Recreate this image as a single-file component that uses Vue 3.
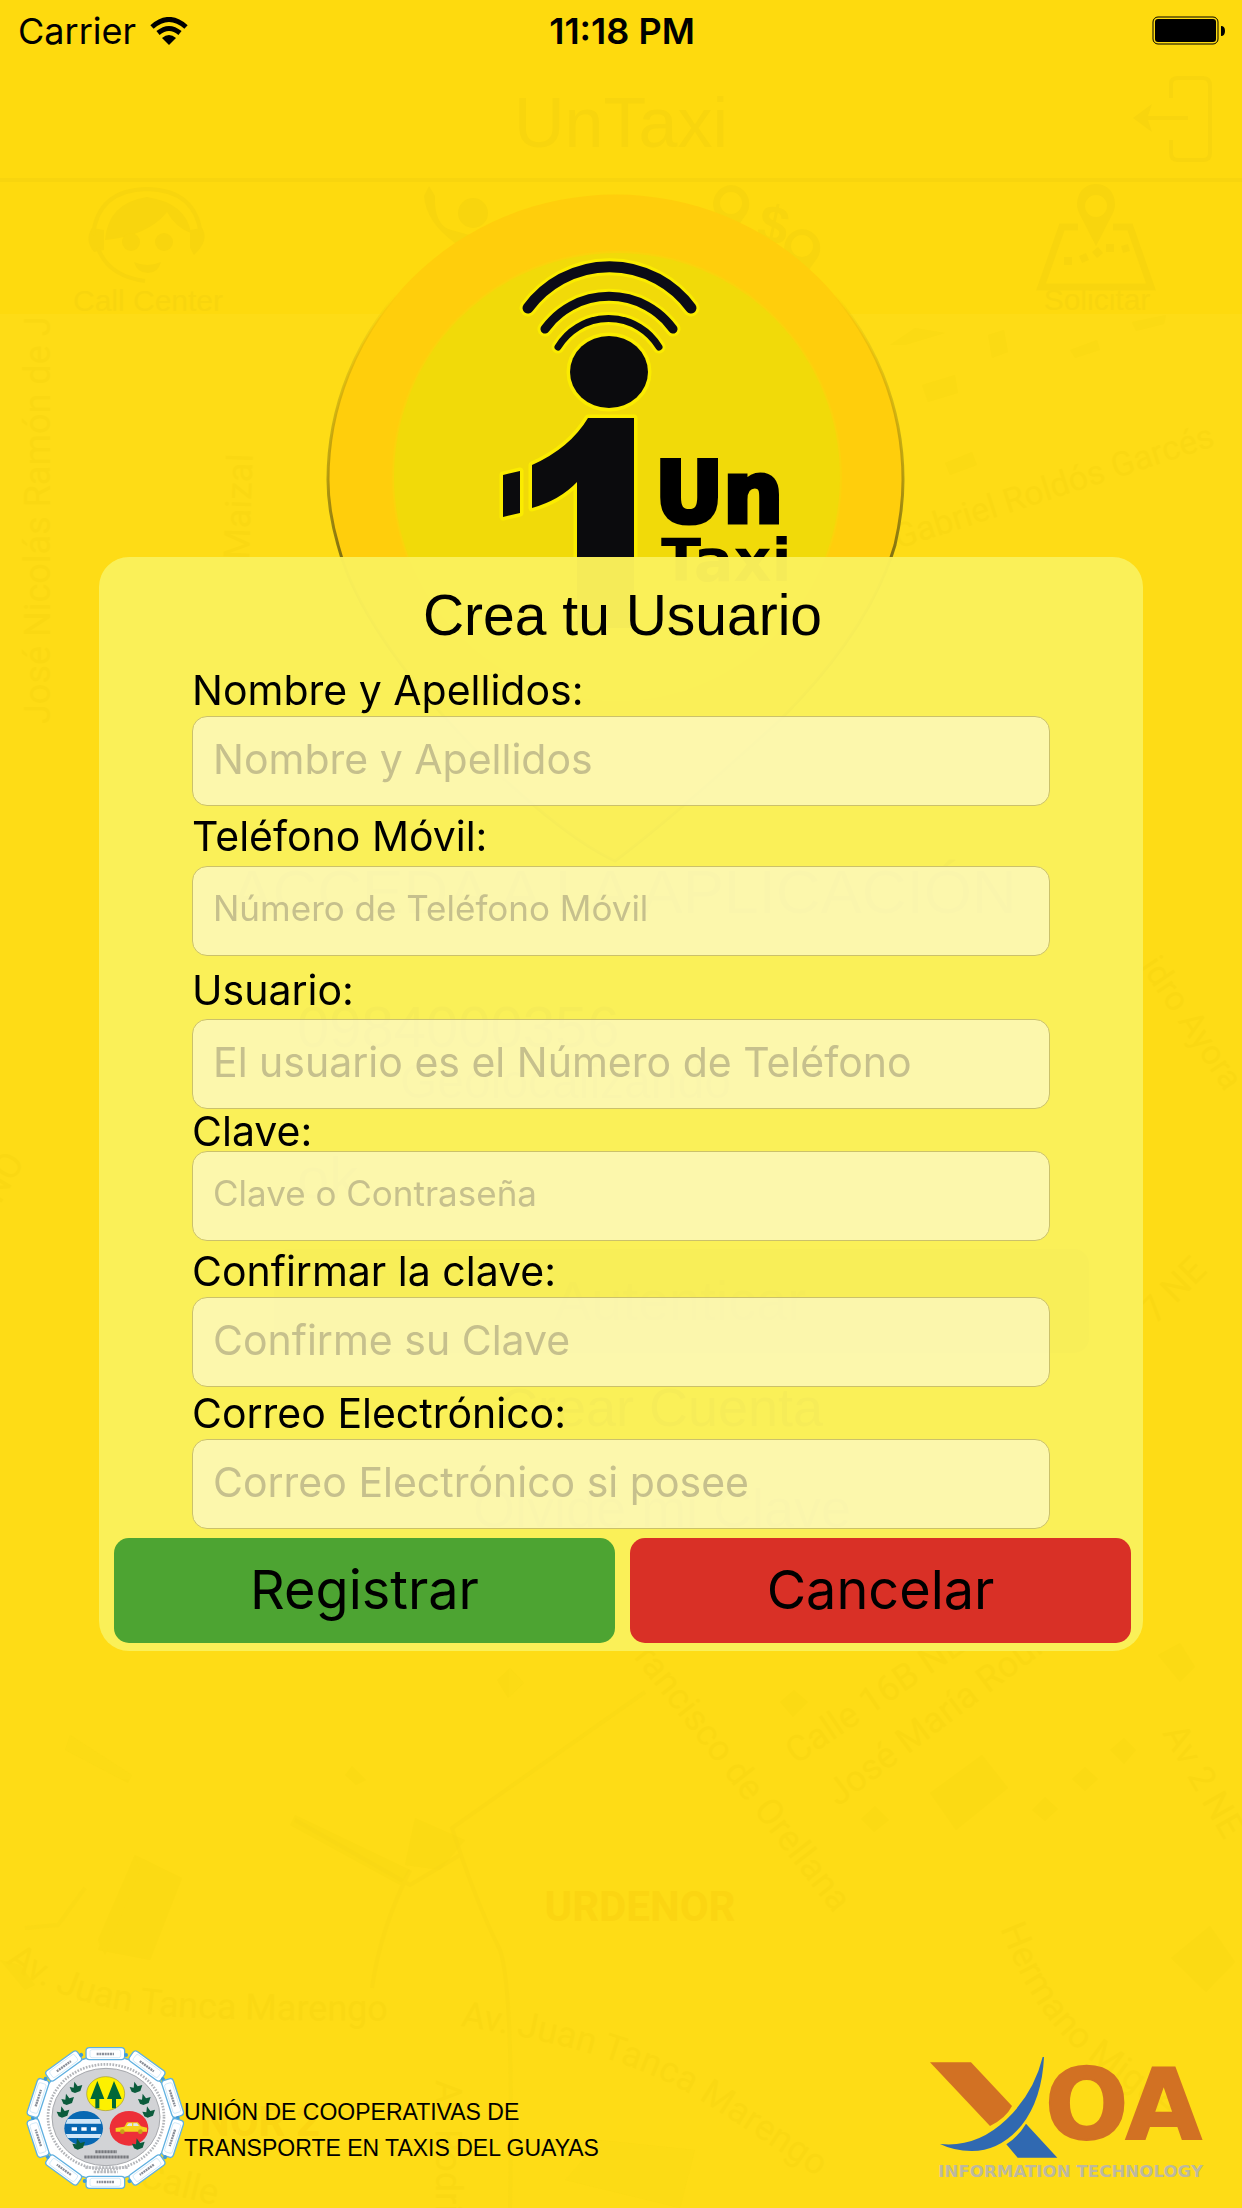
<script setup>
import { reactive } from 'vue'

const fields = [
  { id: 'nombre', label: 'Nombre y Apellidos:', hint: 'Nombre y Apellidos', type: 'text', space: 'first' },
  { id: 'telefono', label: 'Teléfono Móvil:', hint: 'Número de Teléfono Móvil', type: 'tel', space: 'roomy', small: true },
  { id: 'usuario', label: 'Usuario:', hint: 'El usuario es el Número de Teléfono', type: 'text', space: 'wide' },
  { id: 'clave', label: 'Clave:', hint: 'Clave o Contraseña', type: 'password', space: 'snug', small: true },
  { id: 'confirmar', label: 'Confirmar la clave:', hint: 'Confirme su Clave', type: 'password', space: 'normal' },
  { id: 'correo', label: 'Correo Electrónico:', hint: 'Correo Electrónico si posee', type: 'email', space: 'close' },
]

const form = reactive({ nombre: '', telefono: '', usuario: '', clave: '', confirmar: '', correo: '' })

const badges = Array.from({ length: 10 }, (_, i) => {
  const a = ((i * 36 - 90) * Math.PI) / 180
  return {
    x: Math.round(315 + 212 * Math.cos(a)),
    y: Math.round(259 + 193 * Math.sin(a)),
    turn: i * 36,
  }
})

const leaves = [
  [228, 168], [203, 204], [189, 242], [408, 168], [433, 204], [446, 242], [236, 338], [415, 338],
]

const blocks = [
  '890,345 915,328 945,333 905,345', '988,335 1004,330 1008,352 992,358', '1070,350 1097,340 1100,350 1075,358',
  '922,385 955,375 958,393 928,402', '945,463 972,452 977,465 950,475', '1132,322 1166,315 1164,324 1136,331',
  '930,1793 982,1755 1008,1788 956,1830', '1158,1655 1180,1643 1195,1667 1180,1682', '1110,1750 1124,1738 1136,1750 1124,1764',
  '1072,1779 1085,1767 1098,1779 1085,1791', '1032,1810 1045,1797 1058,1809 1045,1821', '861,1819 875,1806 889,1820 874,1832',
  '780,1702 794,1690 808,1702 793,1717', '1171,1958 1210,1926 1235,1962 1206,1992', '135,1855 182,1878 150,1960 98,1950',
  '98,1940 135,1855 140,1870 105,1955', '295,1815 410,1870 400,1885 290,1825', '415,1818 465,1840 440,1870 405,1865',
  '70,1735 132,1775 128,1783 65,1750', '497,1680 510,1668 524,1683 508,1698', '345,1775 352,1766 366,1780 356,1785',
  '565,2180 600,2140 695,2150 680,2208', '0,1960 20,1965 35,1985 25,1990',
]
</script>

<template>
  <div class="screen">
    <svg class="backdrop" viewBox="0 0 1242 2208" preserveAspectRatio="xMidYMin slice" aria-hidden="true">
      <defs>
        <linearGradient id="edge" x1="0" y1="0" x2="0" y2="1">
          <stop offset="0.15" stop-color="#5c5310" stop-opacity="0" />
          <stop offset="0.4" stop-color="#5c5310" stop-opacity="0.4" />
          <stop offset="0.6" stop-color="#5c5310" stop-opacity="0.9" />
        </linearGradient>
        <path id="street-a" d="M6 1962 Q70 2014 200 2018 T420 2020" />
        <path id="street-b" d="M460 2026 Q620 2050 700 2100 T850 2200" />
        <path id="street-c" d="M1000 1928 Q1035 2020 1090 2060 T1190 2140" />
      </defs>

      <!-- map -->
      <g class="blocks">
        <polygon v-for="b in blocks" :key="b" :points="b" />
      </g>
      <g class="roads">
        <path d="M645 1692 L452 1828 Q475 1900 500 1950 Q514 1990 510 2208" />
        <path d="M410 1870 Q380 1930 372 1988" />
        <path d="M460 1855 L410 1885 L295 1820" />
        <path d="M85 1888 L58 1925 L25 1928" />
      </g>
      <g class="streets">
        <text transform="translate(50 724) rotate(-90)">José Nicolás Ramón de J</text>
        <text transform="translate(249 560) rotate(-88)">Maizal</text>
        <text class="minor" transform="translate(898 549) rotate(-18)">Gabriel Roldós Garcés</text>
        <text class="minor" transform="translate(1140 966) rotate(56)">idro Ayora</text>
        <text transform="translate(1155 1325) rotate(-45)">7 NE</text>
        <text transform="translate(0 1205) rotate(-60)">NO</text>
        <text transform="translate(834 1914) rotate(52)" text-anchor="end">Francisco de Orellana</text>
        <text transform="translate(796 1765) rotate(-34)">Calle 16B NE</text>
        <text transform="translate(838 1807) rotate(-37)">José María Roura</text>
        <text transform="translate(1162 1733) rotate(60)">Av 2 NE</text>
        <text transform="translate(436 2080) rotate(90)">Av Rodri</text>
        <text transform="translate(138 2186) rotate(14)">Calle</text>
        <text><textPath href="#street-a">Av. Juan Tanca Marengo</textPath></text>
        <text><textPath href="#street-b">Av. Juan Tanca Marengo</textPath></text>
        <text><textPath href="#street-c">Hermano Miguel</textPath></text>
      </g>
      <g class="zones">
        <text x="640" y="1921" text-anchor="middle">URDENOR</text>
        <text x="200" y="2136">NOR 2</text>
      </g>

      <!-- navigation bar and tabs -->
      <rect class="bar" width="1242" height="314" />
      <rect class="ghost" y="178" width="1242" height="4" />
      <g class="ghost">
        <text class="brand" x="621" y="147" text-anchor="middle">UnTaxi</text>
        <text class="tab" x="148" y="311" text-anchor="middle">Call Center</text>
        <text class="tab" x="1097" y="310" text-anchor="middle">Solicitar</text>
        <path d="M1133 118 L1152 104 L1148 116 H1188 V120 H1148 L1152 132 Z" />
        <path d="M105 240 Q108 203 147 197 Q186 203 191 233 Q176 228 167 212 Q148 236 105 240 Z" />
        <ellipse cx="131" cy="242" rx="9" ry="9" />
        <ellipse cx="164" cy="242" rx="9" ry="9" />
        <path d="M134 262 Q147 268 161 262 Q158 273 148 273 Q137 273 134 262 Z" />
        <path d="M92 228 Q84 240 94 252 L104 250 V230 Z M202 228 Q210 240 194 255 L190 248 V230 Z" />
        <path d="M429 186 L435 196 Q434 222 448 229 L473 236 L500 230 L480 270 L455 243 Q426 222 424 196 Z" />
        <circle cx="473" cy="213" r="15" />
        <text class="coin" transform="translate(755 240) rotate(12)">$</text>
        <path fill-rule="evenodd" d="M1096 184 a18 20 0 0 1 17 29 L1096 246 L1079 213 a18 20 0 0 1 17 -29 Z M1096 195 a11 11 0 1 0 0 22 a11 11 0 0 0 0 -22 Z" />
        <path fill-rule="evenodd" d="M731 185 a19 19 0 0 1 16 28 L738 226 L716 214 a19 19 0 0 1 15 -29 Z M731 192 a11 11 0 1 0 0 22 a11 11 0 0 0 0 -22 Z" />
        <path fill-rule="evenodd" d="M802 229 a19 19 0 0 1 16 28 L806 274 L786 256 a19 19 0 0 1 16 -27 Z M802 235 a11 11 0 1 0 0 22 a11 11 0 0 0 0 -22 Z" />
        <path d="M1064 257 h8 v8 h-8 z M1079 256 l7 -3 3 7 -7 3 z M1092 252 l6 -5 5 6 -6 5 z M1106 244 h8 v8 h-8 z M1121 246 l7 -2 2 7 -7 2 z" />
      </g>
      <g class="ghost-line">
        <path d="M1171 98 V84 Q1171 78 1178 78 H1203 Q1210 78 1210 86 V153 Q1210 160 1203 160 H1178 Q1171 160 1171 153 V140" />
        <path d="M93 235 Q98 190 147 189 Q196 190 201 235" />
        <path d="M98 248 Q108 276 145 281" />
        <path d="M1078 227 H1062 L1041 287 H1151 L1130 227 H1113" stroke-width="7" />
      </g>

      <!-- sign-in screen hidden behind the dialog -->
      <g class="under">
        <text x="624" y="913" text-anchor="middle" font-size="62">ACCEDA A LA APLICACIÓN</text>
        <text x="297" y="1047" font-size="58">0984000356</text>
        <text x="400" y="1098" font-size="48">Geolocalizando</text>
        <text x="297" y="1198" font-size="58">ok</text>
        <rect x="274" y="1249" width="815" height="104" rx="15" opacity="0.5" />
        <text x="680" y="1320" text-anchor="middle" font-size="56">Autenticar</text>
        <text x="661" y="1426" text-anchor="middle" font-size="54">Crear Cuenta</text>
        <text x="662" y="1527" text-anchor="middle" font-size="54">Olvidé mi Clave</text>
      </g>

      <!-- pin logo -->
      <path
        d="M615 861 Q570 840 503 778 Q362 640 338 545 Q328 510 328 480 A287 285 0 0 1 903 480 Q903 510 895 545 Q870 630 780 720 Q670 820 615 861 Z"
        fill="#ffce0c" stroke="url(#edge)" stroke-width="3"
      />
      <ellipse cx="617" cy="477" rx="224" ry="225" fill="#f1da09" stroke="#fbd30c" stroke-width="2" />
      <g v-for="pass in ['halo', 'ink']" :key="pass" :class="pass">
        <path class="wave w1" d="M528 308 A101 101 0 0 1 691 308" />
        <path class="wave w2" d="M545 329 A79 79 0 0 1 673 329" />
        <path class="wave w3" d="M558 347 A59 59 0 0 1 659 347" />
        <ellipse cx="609" cy="372" rx="39" ry="36" />
        <path d="M588 418 H634 V628 H577 V482 Q560 500 532 508 V465 Q570 448 588 418 Z" />
        <path d="M503 475 L520 471 V513 L503 517 Z" />
      </g>
      <g class="wordmark">
        <text class="un" x="655" y="522">Un</text>
        <text class="taxi" x="661" y="581">Taxi</text>
      </g>
    </svg>

    <header class="status">
      <div class="carrier">
        <span>Carrier</span>
        <svg width="38" height="28" viewBox="0 0 38 28" aria-label="Wi-Fi">
          <g fill="none" stroke="#000" stroke-width="5">
            <path d="M2 10 Q19 -5 36 10" />
            <path d="M8 16 Q19 7 30 16" />
          </g>
          <path d="M12 21 Q19 15 26 21 L19 28 Z" />
        </svg>
      </div>
      <time>11:18 PM</time>
      <div class="power">
        <svg width="74" height="30" viewBox="0 0 74 30" aria-label="Batería">
          <rect x="1" y="1" width="65" height="27" rx="5" fill="none" stroke="#000" stroke-width="1" />
          <rect x="3" y="3" width="61" height="23" rx="3" />
          <path d="M69 10 Q73 10 73 15 Q73 20 69 20 Z" />
        </svg>
      </div>
    </header>

    <main>
      <form class="card" @submit.prevent>
        <h1>Crea tu Usuario</h1>
        <div class="fields">
          <div v-for="f in fields" :key="f.id" class="field" :class="f.space">
            <label :for="f.id">{{ f.label }}</label>
            <input :id="f.id" v-model="form[f.id]" :type="f.type" :placeholder="f.hint" :class="{ small: f.small }" />
          </div>
        </div>
        <div class="actions">
          <button type="submit" class="ok">Registrar</button>
          <button type="button" class="cancel">Cancelar</button>
        </div>
      </form>
    </main>

    <footer>
      <svg class="seal" width="158" height="146" viewBox="77 40 474 438" aria-label="Unión de Cooperativas">
        <ellipse cx="315" cy="259" rx="204" ry="186" fill="#fff" stroke="#5fb0e0" stroke-width="4" />
        <g v-for="b in badges" :key="b.turn" :transform="`translate(${b.x} ${b.y}) rotate(${b.turn})`">
          <rect x="-58" y="-18" width="116" height="36" rx="10" fill="#fff" stroke="#5fb0e0" stroke-width="4" />
          <rect x="-46" y="-12" width="92" height="24" rx="6" fill="#fff" stroke="#c5e2f4" stroke-width="2" />
          <path d="M-26 1 H26" stroke="#8a8f99" stroke-width="7" stroke-dasharray="6 2" />
          <circle cx="62" cy="4" r="6" fill="#3f9bd8" />
        </g>
        <ellipse cx="317" cy="256" rx="174" ry="158" fill="none" stroke="#b3b5b9" stroke-width="8" stroke-dasharray="5 4" />
        <ellipse cx="317" cy="256" rx="162" ry="146" fill="#d2d3d6" stroke="#a8aaae" stroke-width="3" />
        <ellipse cx="316" cy="186" rx="57" ry="51" fill="#fdf100" stroke="#a59a30" stroke-width="2" />
        <path d="M291 148 L312 202 H297 V230 H285 V202 H270 Z M341 148 L364 202 H347 V230 H335 V202 H320 Z" fill="#006838" />
        <ellipse cx="250" cy="290" rx="58" ry="52" fill="#0868b3" />
        <path d="M202 262 H298 L303 276 H196 Z M196 307 H303 L298 319 H202 Z" fill="#cfe6f7" />
        <path d="M214 287 h16 v10 h-16 z M243 287 h16 v10 h-16 z M272 287 h16 v10 h-16 z" fill="#fff" />
        <ellipse cx="386" cy="290" rx="58" ry="52" fill="#ed2f38" />
        <path d="M346 289 L372 285 L380 272 H412 L422 284 L440 288 V300 H346 Z" fill="#f4d21f" />
        <path d="M379 283 L385 275 H395 V283 Z M399 275 H410 L416 283 H399 Z" fill="#dfe7ef" />
        <circle cx="366" cy="300" r="7" fill="#c8a018" />
        <circle cx="420" cy="300" r="7" fill="#c8a018" />
        <path
          v-for="l in leaves" :key="l.join()" :transform="`translate(${l[0]} ${l[1]})`"
          d="M-20 -2 L-8 0 L-6 -18 L4 -4 L18 -8 L12 10 L-4 16 L-14 12 Z" fill="#0b5c3c"
        />
        <path d="M285 360 H350 M252 376 H386" stroke="#77797e" stroke-width="9" stroke-dasharray="7 2" />
        <path d="M255 408 H385 M280 421 H352" stroke="#b9bbbf" stroke-width="8" stroke-dasharray="7 3" />
      </svg>
      <p>UNIÓN DE COOPERATIVAS DE<br />TRANSPORTE EN TAXIS DEL GUAYAS</p>
      <svg class="xoa" width="284" height="124" viewBox="57 50 852 372">
        <path d="M60 69 H183 L306 200 Q288 236 240 260 Z" fill="#d27123" />
        <path d="M90 314 Q200 326 290 240 Q372 160 398 53 L402 53 Q396 180 335 258 Q270 335 185 335 Q130 334 90 314 Z" fill="#3069b1" />
        <path d="M348 253 L442 355 H323 L289 315 Q325 292 348 253 Z" fill="#3069b1" />
        <text class="oa" x="405" y="300">OA</text>
        <text class="tagline" x="482" y="414" text-anchor="middle">INFORMATION TECHNOLOGY</text>
      </svg>
    </footer>
  </div>
</template>

<style>
body {
  margin: 0;
  background: #fedc16;
}
</style>

<style scoped>
.screen {
  position: relative;
  display: flex;
  flex-direction: column;
  min-height: 100vh;
  overflow: hidden;
  background: #fedc16;
  color: #000;
  font-family: Inter, "Liberation Sans", sans-serif;
}

.backdrop {
  position: absolute;
  inset: 0;
  width: 100%;
  height: 100%;
}

.bar { fill: #feda0e; }
.blocks { fill: #fad913; opacity: 0.5; }
.roads { fill: none; stroke: #f8d714; stroke-width: 4; opacity: 0.4; }
.streets { fill: #fad813; font-family: Roboto, sans-serif; font-size: 36px; }
.minor { font-size: 34px; }
.zones { fill: #fbd512; font-family: Roboto, sans-serif; font-size: 42px; font-weight: 700; }
.ghost { fill: #f8d50e; font-family: "Liberation Sans", sans-serif; }
.ghost-line { fill: none; stroke: #f8d50e; stroke-width: 4; }
.brand { font-size: 70px; }
.tab { font-size: 30px; }
.coin { font-size: 54px; font-weight: 700; }
.under { fill: #000; opacity: 0.8; font-family: "Liberation Sans", sans-serif; }

.halo { fill: #fbec00; stroke: #fbec00; stroke-width: 7; stroke-linejoin: round; }
.ink { fill: #0b0b0d; }
.wave { fill: none; stroke-linecap: round; }
.ink .wave { stroke: #0b0b16; }
.ink .w1 { stroke-width: 11; }
.ink .w2 { stroke-width: 9; }
.ink .w3 { stroke-width: 7; }
.halo .w1 { stroke-width: 17; }
.halo .w2 { stroke-width: 15; }
.halo .w3 { stroke-width: 13; }
.wordmark {
  fill: #000;
  font-family: "DejaVu Sans", sans-serif;
  font-weight: 700;
}
.un { font-size: 84px; stroke: #000; stroke-width: 5; }
.taxi { font-size: 59px; }

.status {
  position: relative;
  display: grid;
  grid-template-columns: 1fr auto 1fr;
  align-items: center;
  height: 62px;
  padding: 0 16px 0 18px;
  font-size: 36px;
}
.carrier { display: flex; align-items: center; gap: 14px; }
.status time { font-weight: 600; }
.power { display: flex; justify-content: flex-end; }

main {
  position: relative;
  padding: 495px 99px 0;
}

.card {
  padding: 24px 12px 8px 15px;
  border-radius: 30px;
  background: rgba(250, 240, 90, 0.98);
}

h1 {
  margin: 0;
  font: 400 57px/68px "Liberation Sans", sans-serif;
  text-align: center;
}

.fields { padding: 0 81px 0 78px; }
.field { display: flex; flex-direction: column; }
.first { padding-top: 23px; gap: 8px; }
.roomy { padding-top: 12px; gap: 12px; }
.wide { padding-top: 16px; gap: 11px; }
.snug { padding-top: 4px; gap: 2px; }
.normal { padding-top: 12px; gap: 8px; }
.close { padding-top: 8px; gap: 8px; }

label {
  font-size: 41px;
  line-height: 36px;
}

input {
  box-sizing: border-box;
  width: 100%;
  height: 90px;
  padding: 0 20px 4px;
  border: 1px solid #cbc16a;
  border-radius: 15px;
  background: rgba(255, 255, 255, 0.5);
  color: #000;
  font-family: inherit;
  font-size: 41px;
}
input.small { padding-bottom: 6px; font-size: 35px; }
input::placeholder { color: #c6c08d; opacity: 1; }

.actions {
  display: flex;
  gap: 15px;
  padding-top: 9px;
}
button {
  flex: 1;
  height: 105px;
  padding: 0 0 3px;
  border: 0;
  border-radius: 15px;
  color: #000;
  font-family: inherit;
  font-size: 54px;
}
.ok { background: #4da432; }
.cancel { background: #d93026; }

footer {
  position: relative;
  display: flex;
  align-items: center;
  margin-top: auto;
  padding: 0 29px 17px 26px;
}
footer p {
  margin: 0;
  padding-top: 24px;
  font: 23px/36px "Liberation Sans", sans-serif;
}
.xoa { margin-left: auto; }
.oa {
  fill: #d27123;
  stroke: #d27123;
  stroke-width: 6;
  font-family: "DejaVu Sans", sans-serif;
  font-size: 294px;
  font-weight: 700;
}
.tagline { fill: #bdb9a0; font-family: "DejaVu Sans", sans-serif; font-size: 50px; font-weight: 700; }
</style>
